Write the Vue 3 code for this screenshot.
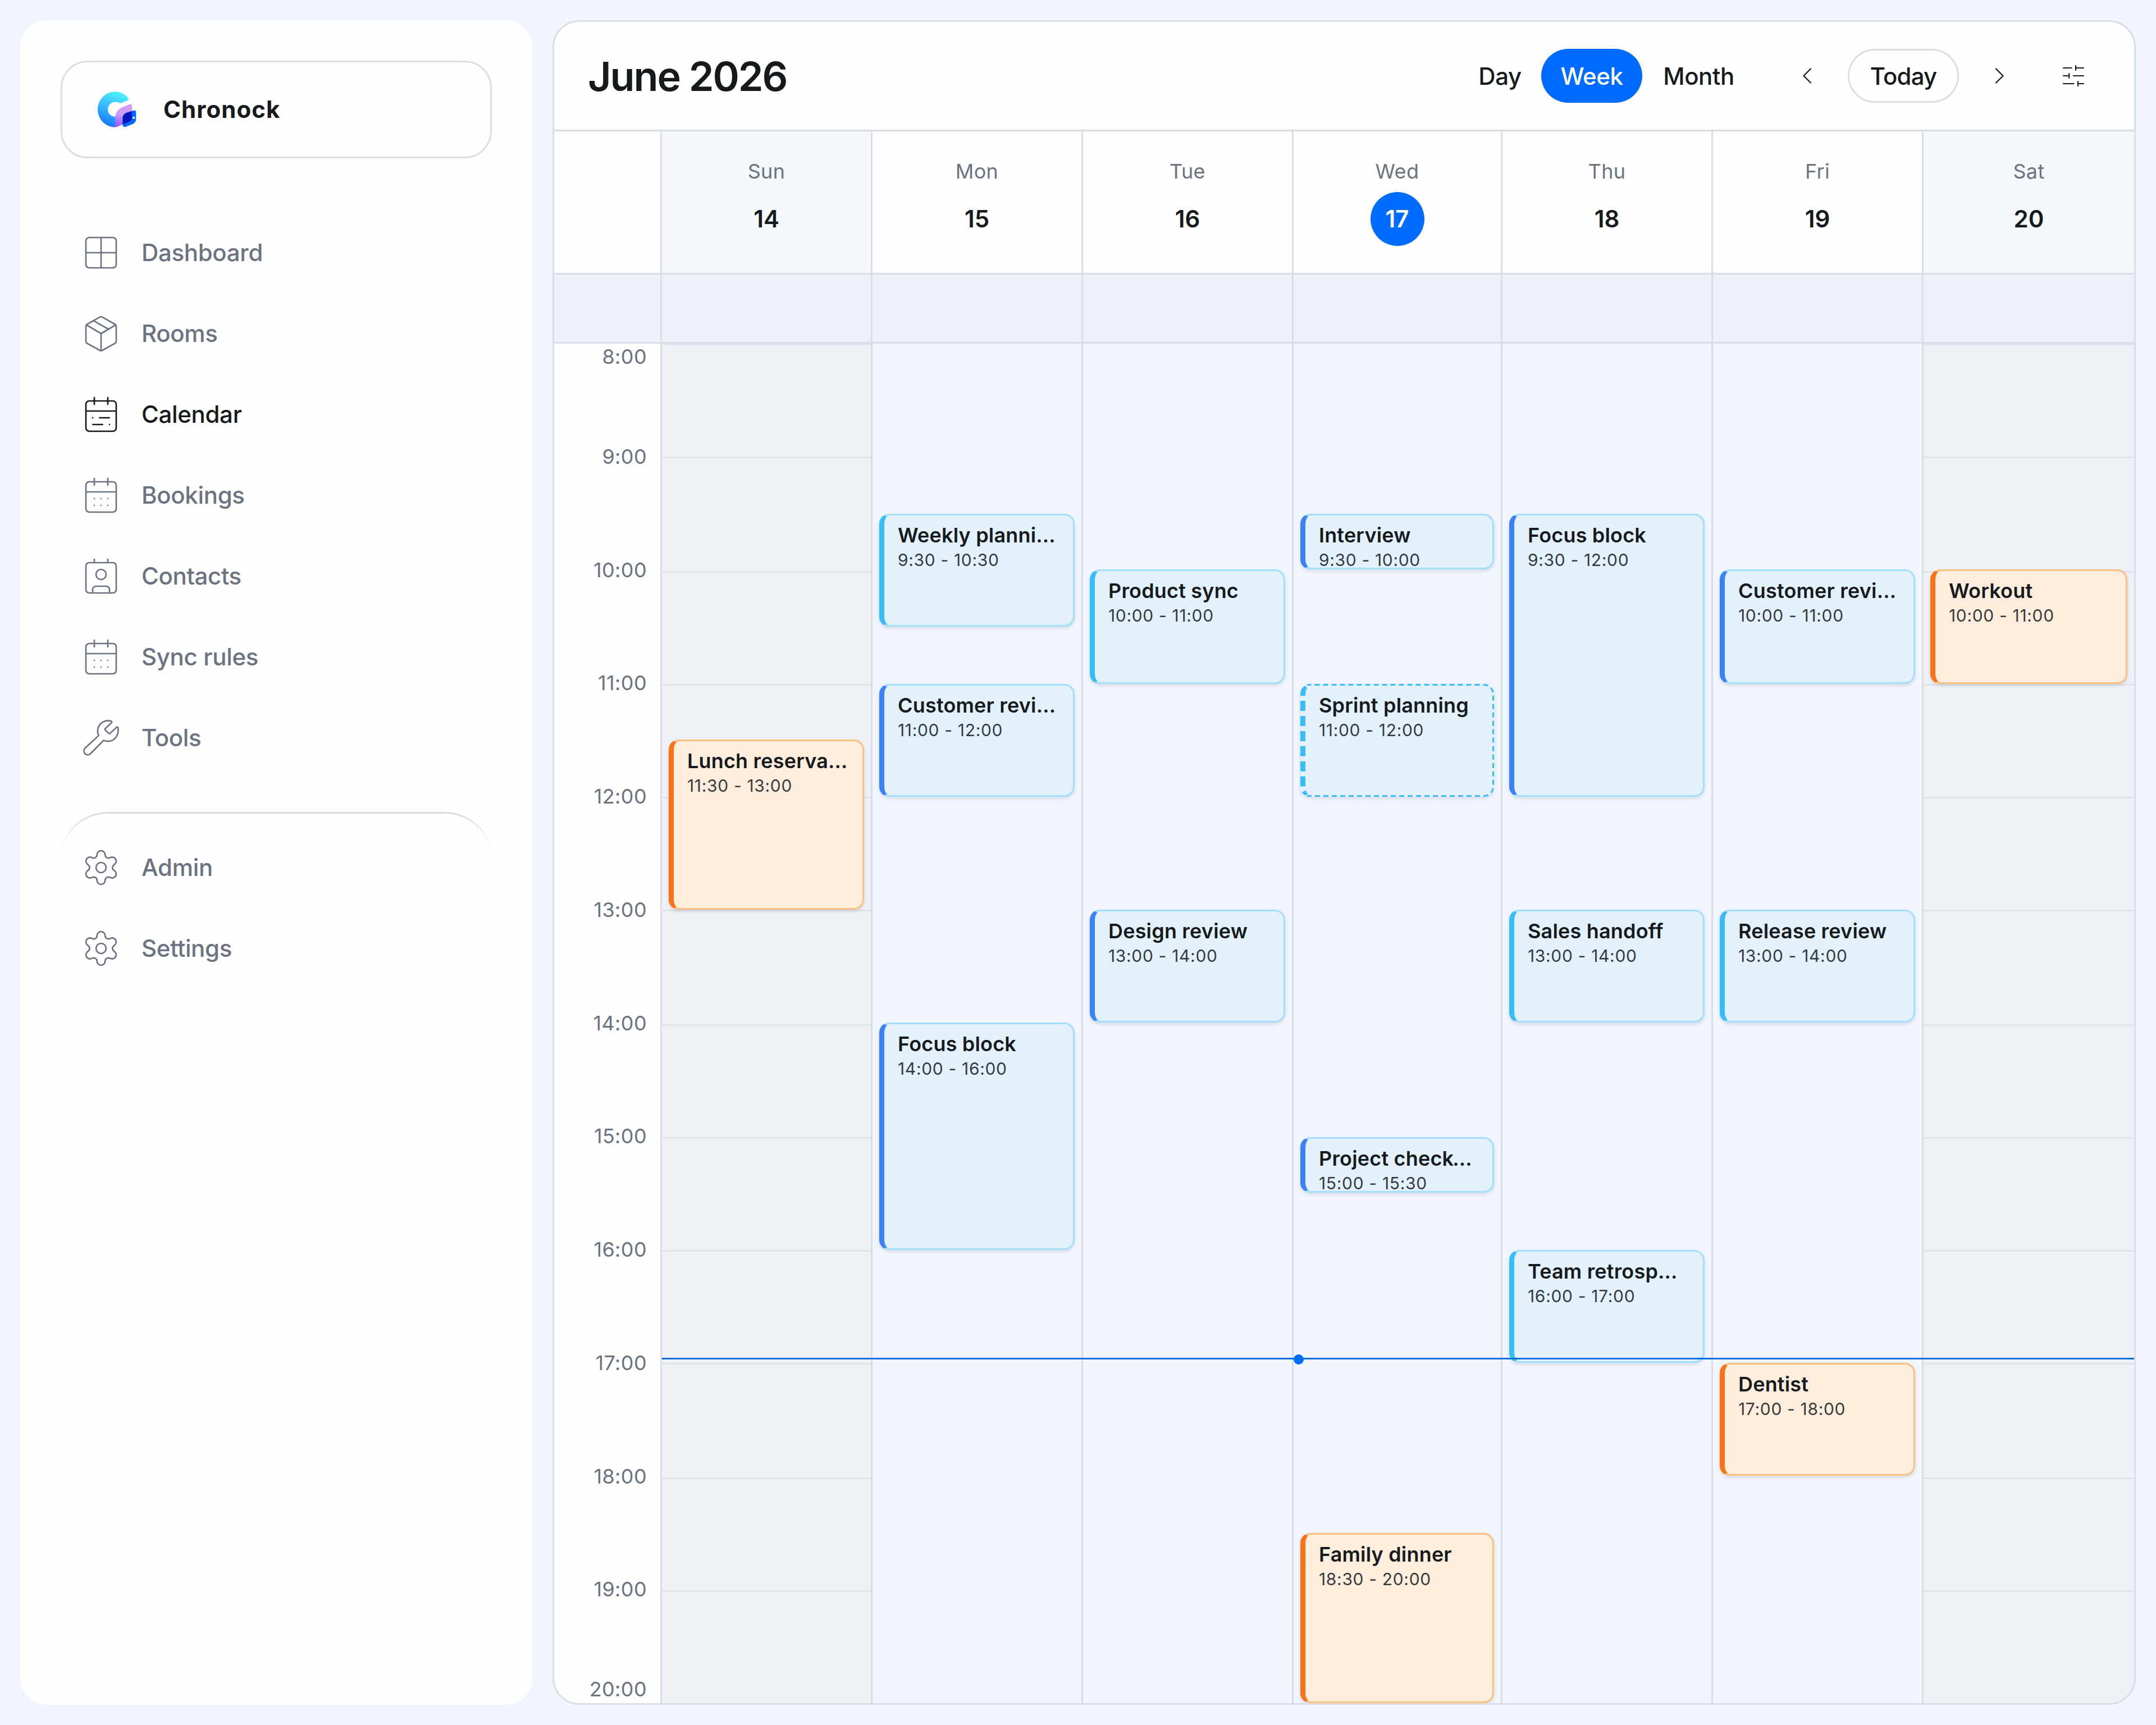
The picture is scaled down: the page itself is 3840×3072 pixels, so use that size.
<script setup>
const mainNav = [
  { label: "Dashboard", icon: "grid" },
  { label: "Rooms", icon: "box" },
  { label: "Calendar", icon: "schedule", active: true },
  { label: "Bookings", icon: "calendar" },
  { label: "Contacts", icon: "contact" },
  { label: "Sync rules", icon: "calendar" },
  { label: "Tools", icon: "wrench" },
];

const footerNav = [
  { label: "Admin", icon: "gear" },
  { label: "Settings", icon: "gear" },
];

const icons = {
  grid: "M5 3h14a2 2 0 0 1 2 2v14a2 2 0 0 1-2 2H5a2 2 0 0 1-2-2V5a2 2 0 0 1 2-2zM12 3v18M3 12h18",
  box: "M11.3 2.2a1.5 1.5 0 0 1 1.4 0l7.6 4.3a1.4 1.4 0 0 1 .7 1.2v8.9a1.4 1.4 0 0 1-.7 1.2l-7.6 4.2a1.5 1.5 0 0 1-1.4 0l-7.6-4.2a1.4 1.4 0 0 1-.7-1.2V7.7a1.4 1.4 0 0 1 .7-1.2zM3.3 6.9L12 12l8.7-5.1M12 12v10.2M7.5 4.4l9.1 5.1",
  schedule:
    "M5 4h14a2 2 0 0 1 2 2v14a2 2 0 0 1-2 2H5a2 2 0 0 1-2-2V6a2 2 0 0 1 2-2zM3 10h18M8 2v4M16 2v4M7 14h.01M11.1 14h5.8M7.1 18h5.8M17 18h.01",
  calendar:
    "M5 4h14a2 2 0 0 1 2 2v14a2 2 0 0 1-2 2H5a2 2 0 0 1-2-2V6a2 2 0 0 1 2-2zM3 10h18M8 2v4M16 2v4M8 14h.01M12 14h.01M16 14h.01M8 18h.01M12 18h.01M16 18h.01",
  contact:
    "M5 4h14a2 2 0 0 1 2 2v14a2 2 0 0 1-2 2H5a2 2 0 0 1-2-2V6a2 2 0 0 1 2-2zM8 2v2M16 2v2M15 11a3 3 0 1 1-6 0a3 3 0 0 1 6 0zM7 22v-2a2 2 0 0 1 2-2h6a2 2 0 0 1 2 2v2",
  wrench:
    "M2.5 18.1L10.5 10.7C9.5 8.3 9.9 5.5 11.8 3.6C13.6 1.9 15.9 1.5 18 2.1C18.5 2.3 18.5 2.7 18.2 3L14.5 6.5C14.2 6.8 14.2 7.1 14.5 7.4L16.5 9.3C16.8 9.6 17.1 9.6 17.4 9.3L21.2 5.7C21.6 5.4 22 5.5 22.1 6C22.4 8.5 21.9 10.7 20.3 12.3C18.5 14.1 15.9 14.4 13.5 13.5L5.7 21.4C4.8 22.3 3.3 22.3 2.4 21.4C1.6 20.5 1.6 19 2.5 18.1z",
  gear: "M9.6 4.4a2.4 2.4 0 0 1 4.8 0A2 2 0 0 0 17.38 6.12A2.4 2.4 0 0 1 19.78 10.28A2 2 0 0 0 19.78 13.72A2.4 2.4 0 0 1 17.38 17.88A2 2 0 0 0 14.4 19.6A2.4 2.4 0 0 1 9.6 19.6A2 2 0 0 0 6.62 17.88A2.4 2.4 0 0 1 4.22 13.72A2 2 0 0 0 4.22 10.28A2.4 2.4 0 0 1 6.62 6.12A2 2 0 0 0 9.6 4.4zM15 12a3 3 0 1 1-6 0a3 3 0 0 1 6 0z",
};

const START_HOUR = 8;
const END_HOUR = 20;
const HOUR_HEIGHT = 201.75;

const hours = Array.from({ length: END_HOUR - START_HOUR + 1 }, (_, i) => START_HOUR + i);

const slotTop = (hour) => Math.round(((hour - START_HOUR) * HOUR_HEIGHT) / 3) * 3;
const eventEdge = (hour) => Math.round(((hour - START_HOUR) * HOUR_HEIGHT) / 3 - 0.1) * 3;

const slots = hours.slice(0, -1).map((hour) => ({
  hour,
  height: slotTop(hour + 1) - slotTop(hour),
}));

const formatTime = (value) => {
  const minutes = Math.round((value % 1) * 60);
  return `${Math.floor(value)}:${String(minutes).padStart(2, "0")}`;
};

const eventStyle = (event) => ({
  top: `${eventEdge(event.start)}px`,
  height: `${eventEdge(event.end) - eventEdge(event.start)}px`,
});

const days = [
  {
    name: "Sun",
    date: 14,
    weekend: true,
    events: [{ title: "Lunch reservation", start: 11.5, end: 13, color: "orange" }],
  },
  {
    name: "Mon",
    date: 15,
    events: [
      { title: "Weekly planning", start: 9.5, end: 10.5, color: "sky" },
      { title: "Customer review", start: 11, end: 12, color: "blue" },
      { title: "Focus block", start: 14, end: 16, color: "blue" },
    ],
  },
  {
    name: "Tue",
    date: 16,
    events: [
      { title: "Product sync", start: 10, end: 11, color: "sky" },
      { title: "Design review", start: 13, end: 14, color: "blue" },
    ],
  },
  {
    name: "Wed",
    date: 17,
    today: true,
    events: [
      { title: "Interview", start: 9.5, end: 10, color: "blue" },
      { title: "Sprint planning", start: 11, end: 12, color: "sky", tentative: true },
      { title: "Project check-in", start: 15, end: 15.5, color: "blue" },
      { title: "Family dinner", start: 18.5, end: 20, color: "orange" },
    ],
  },
  {
    name: "Thu",
    date: 18,
    events: [
      { title: "Focus block", start: 9.5, end: 12, color: "blue" },
      { title: "Sales handoff", start: 13, end: 14, color: "sky" },
      { title: "Team retrospective", start: 16, end: 17, color: "sky" },
    ],
  },
  {
    name: "Fri",
    date: 19,
    events: [
      { title: "Customer review", start: 10, end: 11, color: "blue" },
      { title: "Release review", start: 13, end: 14, color: "sky" },
      { title: "Dentist", start: 17, end: 18, color: "orange" },
    ],
  },
  {
    name: "Sat",
    date: 20,
    weekend: true,
    events: [{ title: "Workout", start: 10, end: 11, color: "orange" }],
  },
];
</script>

<template>
  <div class="app">
    <aside class="sidebar">
      <div class="brand">
        <svg class="brand__logo" viewBox="222 188 206 190">
          <defs>
            <linearGradient id="logo-ring" x1="0.7" y1="0.1" x2="0.4" y2="1">
              <stop offset="0" stop-color="#4aeaff" />
              <stop offset="0.5" stop-color="#36b4ff" />
              <stop offset="1" stop-color="#1677ff" />
            </linearGradient>
            <linearGradient id="logo-leaf" x1="0.6" y1="0" x2="0.4" y2="1">
              <stop offset="0" stop-color="#d29bf6" />
              <stop offset="0.45" stop-color="#cf9dff" />
              <stop offset="1" stop-color="#9358ff" />
            </linearGradient>
          </defs>
          <path
            fill="url(#logo-ring)"
            d="M385 224C368 201 343 188 316 188A94 94 0 0 0 222 283A94 94 0 0 0 306 377L318 372V322C293 321 276 304 276 283A40 40 0 0 1 316 243Q328 243 338 248Q343 250 350 247L380 235Q389 231 385 224z"
          />
          <path
            fill="url(#logo-leaf)"
            d="M315 326Q315 290 348 273L390 256Q404 251 404 266V322Q404 340 390 349L325 375Q314 379 304 376Q315 373 315 358z"
          />
          <path
            fill="#0069ff"
            d="M355 330Q355 310 374 301L413 288Q426 285 426 298V334Q426 350 411 359L372 375Q355 380 355 362z"
          />
          <path fill="#0019bd" d="M355 330Q355 310 374 301L404 291V325Q404 342 389 349L355 362z" />
          <circle cx="414" cy="327" r="6" fill="#fff" />
        </svg>
        <span class="brand__name">Chronock</span>
      </div>

      <nav class="nav">
        <a
          v-for="item in mainNav"
          :key="item.label"
          class="nav__item"
          :class="{ 'nav__item--active': item.active }"
        >
          <svg class="nav__icon" viewBox="0 0 24 24"><path :d="icons[item.icon]" /></svg>
          <span class="nav__label">{{ item.label }}</span>
        </a>
      </nav>

      <nav class="nav nav--footer">
        <a v-for="item in footerNav" :key="item.label" class="nav__item">
          <svg class="nav__icon" viewBox="0 0 24 24"><path :d="icons[item.icon]" /></svg>
          <span class="nav__label">{{ item.label }}</span>
        </a>
      </nav>
    </aside>

    <main class="calendar">
      <header class="toolbar">
        <h1 class="toolbar__title">June 2026</h1>
        <div class="views">
          <button class="view view--day">Day</button>
          <button class="view view--week">Week</button>
          <button class="view view--month">Month</button>
        </div>
        <div class="pager">
          <button class="icon-button">
            <svg viewBox="0 0 48 48"><path d="M30 11.5L17.5 24L30 36.5" /></svg>
          </button>
          <button class="today">Today</button>
          <button class="icon-button">
            <svg viewBox="0 0 48 48"><path d="M18 11.5L30.5 24L18 36.5" /></svg>
          </button>
        </div>
        <button class="icon-button">
          <svg viewBox="0 0 48 48">
            <path
              d="M6 10h14.5M28 6v8M28 10h14M6 24h10M16.2 20v8M24 24h18M6 38h18.5M32 34v8M32 38h10"
            />
          </svg>
        </button>
      </header>

      <div class="row row--days">
        <div class="gutter"></div>
        <div
          v-for="day in days"
          :key="day.date"
          class="day-head"
          :class="{ 'day-head--weekend': day.weekend, 'day-head--today': day.today }"
        >
          <span class="day-head__name">{{ day.name }}</span>
          <span class="day-head__date">{{ day.date }}</span>
        </div>
      </div>

      <div class="row row--all-day">
        <div class="gutter"></div>
        <div v-for="day in days" :key="day.date" class="all-day"></div>
      </div>

      <div class="row row--grid">
        <div class="gutter gutter--hours">
          <span
            v-for="hour in hours"
            :key="hour"
            class="hour"
            :style="{ top: `${(hour - START_HOUR) * HOUR_HEIGHT}px` }"
            >{{ hour }}:00</span
          >
        </div>
        <div
          v-for="day in days"
          :key="day.date"
          class="day"
          :class="{ 'day--weekend': day.weekend }"
        >
          <div
            v-for="slot in slots"
            :key="slot.hour"
            class="slot"
            :style="{ height: `${slot.height}px` }"
          ></div>
          <article
            v-for="event in day.events"
            :key="event.title"
            class="event"
            :class="[`event--${event.color}`, { 'event--tentative': event.tentative }]"
            :style="eventStyle(event)"
          >
            <svg v-if="event.tentative" class="event__dashes"><rect x="-18" y="1.5" rx="16.5" /></svg>
            <div class="event__body">
              <div class="event__title">{{ event.title }}</div>
              <div class="event__time">
                {{ formatTime(event.start) }} - {{ formatTime(event.end) }}
              </div>
            </div>
          </article>
          <span v-if="day.today" class="now-dot"></span>
        </div>
        <div class="now-line"></div>
      </div>
    </main>
  </div>
</template>

<style>
body {
  background: #f1f5ff;
}
</style>

<style scoped>
.app,
.app * {
  box-sizing: border-box;
}
.app {
  --line: #dadde3;
  --text: #161a1c;
  --muted: #6b7280;
  --primary: #006bff;
  display: flex;
  gap: 36px;
  width: 3840px;
  height: 3072px;
  padding: 36px;
  background: #f1f5ff;
  color: var(--text);
  font-family: Inter, "Liberation Sans", sans-serif;
  font-size: 42px;
  overflow: hidden;
}

/* sidebar */
.sidebar {
  flex: none;
  width: 912px;
  padding: 72px;
  border-radius: 48px;
  background: #fefefe;
}
.brand {
  display: flex;
  align-items: center;
  gap: 48px;
  height: 174px;
  padding-left: 63px;
  border: 3px solid var(--line);
  border-radius: 48px;
}
.brand__logo {
  width: 69px;
  height: 64px;
}
.brand__name {
  padding-bottom: 2px;
  font-weight: 700;
  letter-spacing: 0.025em;
}
.nav {
  margin-top: 96px;
}
.nav--footer {
  margin-top: 60px;
  padding-top: 24px;
  border-top: 3px solid var(--line);
  border-radius: 84px 84px 0 0;
}
.nav__item {
  display: flex;
  align-items: center;
  gap: 36px;
  height: 144px;
  padding-left: 36px;
  color: var(--muted);
  font-weight: 500;
  letter-spacing: -0.008em;
}
.nav__item--active {
  color: var(--text);
}
.nav__label {
  padding-bottom: 2px;
}
.nav__icon {
  width: 72px;
  height: 72px;
  fill: none;
  stroke: currentColor;
  stroke-width: 0.88;
  stroke-linecap: round;
  stroke-linejoin: round;
}

/* toolbar */
.calendar {
  display: flex;
  flex-direction: column;
  flex: 1;
  min-width: 0;
  border: 3px solid var(--line);
  border-radius: 48px;
  background: #f1f5fe;
  overflow: hidden;
}
.toolbar {
  display: flex;
  align-items: center;
  flex: none;
  height: 195px;
  padding: 0 60px;
  border-bottom: 3px solid var(--line);
  background: #fefefe;
}
.toolbar__title {
  flex: 1;
  margin: 0;
  font-size: 72px;
  font-weight: 600;
  letter-spacing: -0.03em;
}
.toolbar button {
  height: 96px;
  padding: 0;
  border: 0;
  border-radius: 48px;
  background: none;
  color: var(--text);
  font: inherit;
  font-weight: 500;
  letter-spacing: -0.01em;
}
.views {
  display: flex;
  margin-right: 45px;
}
.view--day {
  width: 147px;
}
.toolbar .view--week {
  width: 180px;
  background: var(--primary);
  color: #fff;
}
.view--month {
  width: 201px;
}
.pager {
  display: flex;
  gap: 24px;
  margin-right: 36px;
}
.toolbar .today {
  width: 198px;
  border: 3px solid var(--line);
  letter-spacing: -0.02em;
}
.icon-button {
  display: flex;
  align-items: center;
  justify-content: center;
  width: 96px;
}
.icon-button svg {
  width: 48px;
  height: 48px;
  fill: none;
  stroke: currentColor;
  stroke-width: 2.2;
  stroke-linecap: round;
  stroke-linejoin: round;
}

/* week rows */
.row {
  display: grid;
  grid-template-columns: 192px repeat(3, 375px) 372px repeat(3, 375px);
  flex: none;
}
.gutter,
.day-head,
.all-day,
.day {
  min-width: 0;
  border-right: 3px solid var(--line);
}
.day-head:last-child,
.all-day:last-child,
.day:nth-last-child(2) {
  border-right: 0;
}
.row--days {
  height: 255px;
  border-bottom: 3px solid var(--line);
  background: #fefefe;
}
.day-head {
  display: flex;
  flex-direction: column;
  align-items: center;
  gap: 10px;
  padding-top: 44px;
}
.day-head--weekend {
  background: #f5f8fb;
}
.day-head__name {
  color: var(--muted);
  font-size: 36px;
  line-height: 54px;
  letter-spacing: 0.01em;
}
.day-head__date {
  width: 96px;
  border-radius: 50%;
  font-weight: 600;
  line-height: 96px;
  text-align: center;
}
.day-head--today .day-head__date {
  background: var(--primary);
  color: #fff;
}
.row--all-day {
  height: 123px;
  border-bottom: 3px solid var(--line);
  background: #eef1fa;
}

/* time grid */
.row--grid {
  position: relative;
  height: 2421px;
}
.gutter--hours {
  position: relative;
  background: #fefefe;
}
.hour {
  position: absolute;
  right: 24px;
  margin-top: -1px;
  color: var(--muted);
  font-size: 36px;
  line-height: 48px;
  letter-spacing: 0.01em;
  transform: translateY(-50%);
}
.hour:first-child {
  transform: none;
}
.hour:last-child {
  transform: translateY(-100%);
}
.day {
  position: relative;
}
.day--weekend {
  background: #eef1f6;
}
.day--weekend .slot {
  border-top: 3px solid #e1e4e9;
}
.event {
  position: absolute;
  left: 12px;
  right: 12px;
  border: 3px solid #a3defc;
  border-left-width: 9px;
  border-radius: 18px;
  background: #e3f1fd;
  box-shadow: 0 3px 6px rgba(15, 23, 42, 0.12);
}
.event--sky {
  border-left-color: #38bdf8;
}
.event--blue {
  border-left-color: #3b82f6;
}
.event--orange {
  border-color: #fdc080;
  border-left-color: #f97316;
  background: #fdeddc;
}
.event--tentative {
  border-color: transparent;
  border-left: 9px dashed #38bdf8;
}
/* top, right and bottom edges of a tentative event */
.event__dashes {
  position: absolute;
  top: -3px;
  left: 3px;
  width: 100%;
  height: calc(100% + 6px);
}
.event__dashes rect {
  width: calc(100% + 16.5px);
  height: calc(100% - 3px);
  fill: none;
  stroke: #38bdf8;
  stroke-width: 3;
  stroke-dasharray: 9 6;
}
.event__body {
  height: 100%;
  padding: 13px 26px 0 24px;
  overflow: hidden;
}
.event__title {
  font-size: 36px;
  font-weight: 600;
  line-height: 45px;
  letter-spacing: 0.005em;
  white-space: nowrap;
  overflow: hidden;
  text-overflow: ellipsis;
}
.event__time {
  font-size: 30px;
  line-height: 43px;
  letter-spacing: 0.022em;
  white-space: nowrap;
  opacity: 0.85;
}
.now-line {
  position: absolute;
  top: 1806px;
  left: 192px;
  right: 0;
  height: 3px;
  background: #0070dc;
}
.now-dot {
  position: absolute;
  top: 1800px;
  left: 0;
  width: 18px;
  height: 18px;
  border-radius: 50%;
  background: var(--primary);
}
</style>
